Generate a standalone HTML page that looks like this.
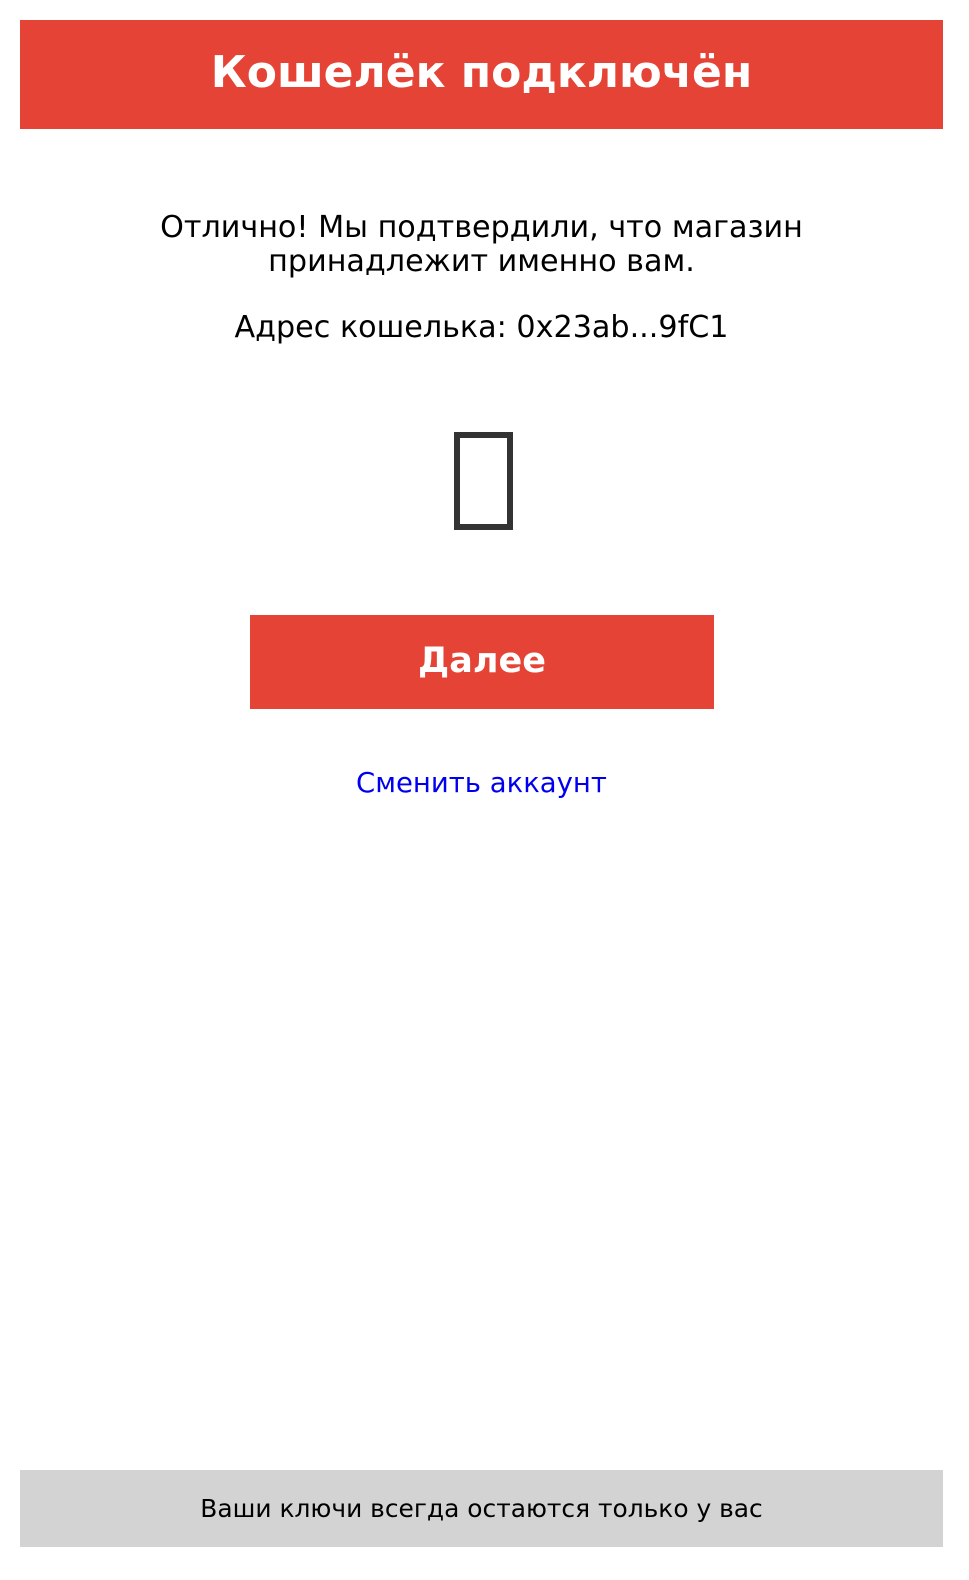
<!DOCTYPE html>
<html><head><meta charset="utf-8"><style>
body{margin:0;width:969px;height:1580px;background:#fff;font-family:"DejaVu Sans","Liberation Sans",sans-serif;position:relative;overflow:hidden}
div{position:absolute;text-align:center}
.h{left:20px;top:20px;width:923px;height:109px;background:#e54335;color:#fff;font-weight:bold;font-size:44px;line-height:106px}
.t{left:0;width:963px;font-size:30.2px;color:#000;line-height:34px}
.icon{left:454px;top:432px;width:47px;height:86px;border:6px solid #333;box-sizing:content-box}
.b{left:250px;top:615px;width:464px;height:94px;background:#e54335;color:#fff;font-weight:bold;font-size:35px;line-height:92px}
.l{left:0;width:963px;top:766px;font-size:27.5px;color:#0000ee;line-height:34px}
.f{left:20px;top:1470px;width:923px;height:77px;background:#d3d3d3;font-size:24.9px;line-height:78px;color:#000}
</style></head><body>
<div class="h">Кошелёк подключён</div>
<div class="t" style="top:211px">Отлично! Мы подтвердили, что магазин<br>принадлежит именно вам.</div>
<div class="t" style="top:311px">Адрес кошелька: 0x23ab...9fC1</div>
<div class="icon"></div>
<div class="b">Далее</div>
<div class="l">Сменить аккаунт</div>
<div class="f">Ваши ключи всегда остаются только у вас</div>
</body></html>
